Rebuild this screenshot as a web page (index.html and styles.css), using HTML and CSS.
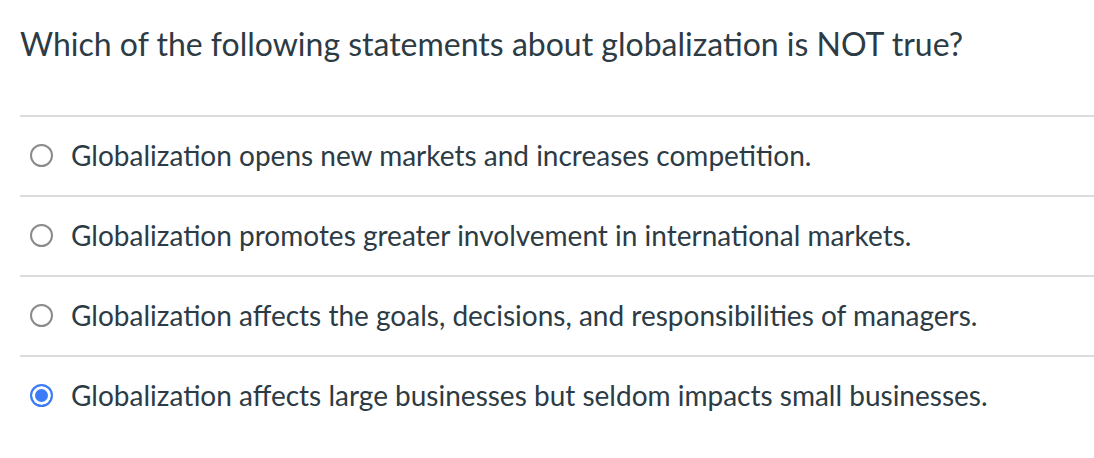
FILE: index.html
```html
<!DOCTYPE html>
<html lang="en">
<head>
  <meta charset="UTF-8">
  <title>Quiz Question</title>
  <link rel="stylesheet" href="styles.css">
</head>
<body>

  <div class="question">
    <p class="question-text">Which of the following statements about globalization is NOT true?</p>

    <div class="answers">
      <label class="answer">
        <span class="radio"></span>
        <span class="answer-text">Globalization opens new markets and increases competition.</span>
      </label>
      <label class="answer">
        <span class="radio"></span>
        <span class="answer-text">Globalization promotes greater involvement in international markets.</span>
      </label>
      <label class="answer">
        <span class="radio"></span>
        <span class="answer-text">Globalization affects the goals, decisions, and responsibilities of managers.</span>
      </label>
      <label class="answer">
        <span class="radio checked"></span>
        <span class="answer-text">Globalization affects large businesses but seldom impacts small businesses.</span>
      </label>
    </div>
  </div>

</body>
</html>
```

FILE: styles.css
```css
body {
  margin: 0;
  font-family: Lato, "Noto Sans", sans-serif;
  color: #2d3b45;
  background: #fff;
}

.question {
  padding-left: 20px;
}

.question-text {
  margin: 0;
  height: 115px;
  padding-top: 24px;
  box-sizing: border-box;
  font-size: 32px;
  line-height: 40px;
}

.answers {
  border-top: 2px solid #dcdcdc;
}

.answer {
  display: flex;
  align-items: center;
  height: 78px;
  padding-bottom: 3px;
  box-sizing: content-box;
  border-bottom: 2px solid #dcdcdc;
  font-size: 28px;
}

.answer {
  height: 75px;
}

.answer:last-child {
  border-bottom: none;
}

.radio {
  width: 19px;
  height: 19px;
  border: 2px solid #8a8a8a;
  border-radius: 50%;
  margin: 2px 18px 0 10px;
  flex-shrink: 0;
}

.radio.checked {
  border-color: #3b7cf6;
  background: #3b7cf6;
  box-shadow: inset 0 0 0 3px #fff;
}

.answer-text {
  line-height: 32px;
}
```
